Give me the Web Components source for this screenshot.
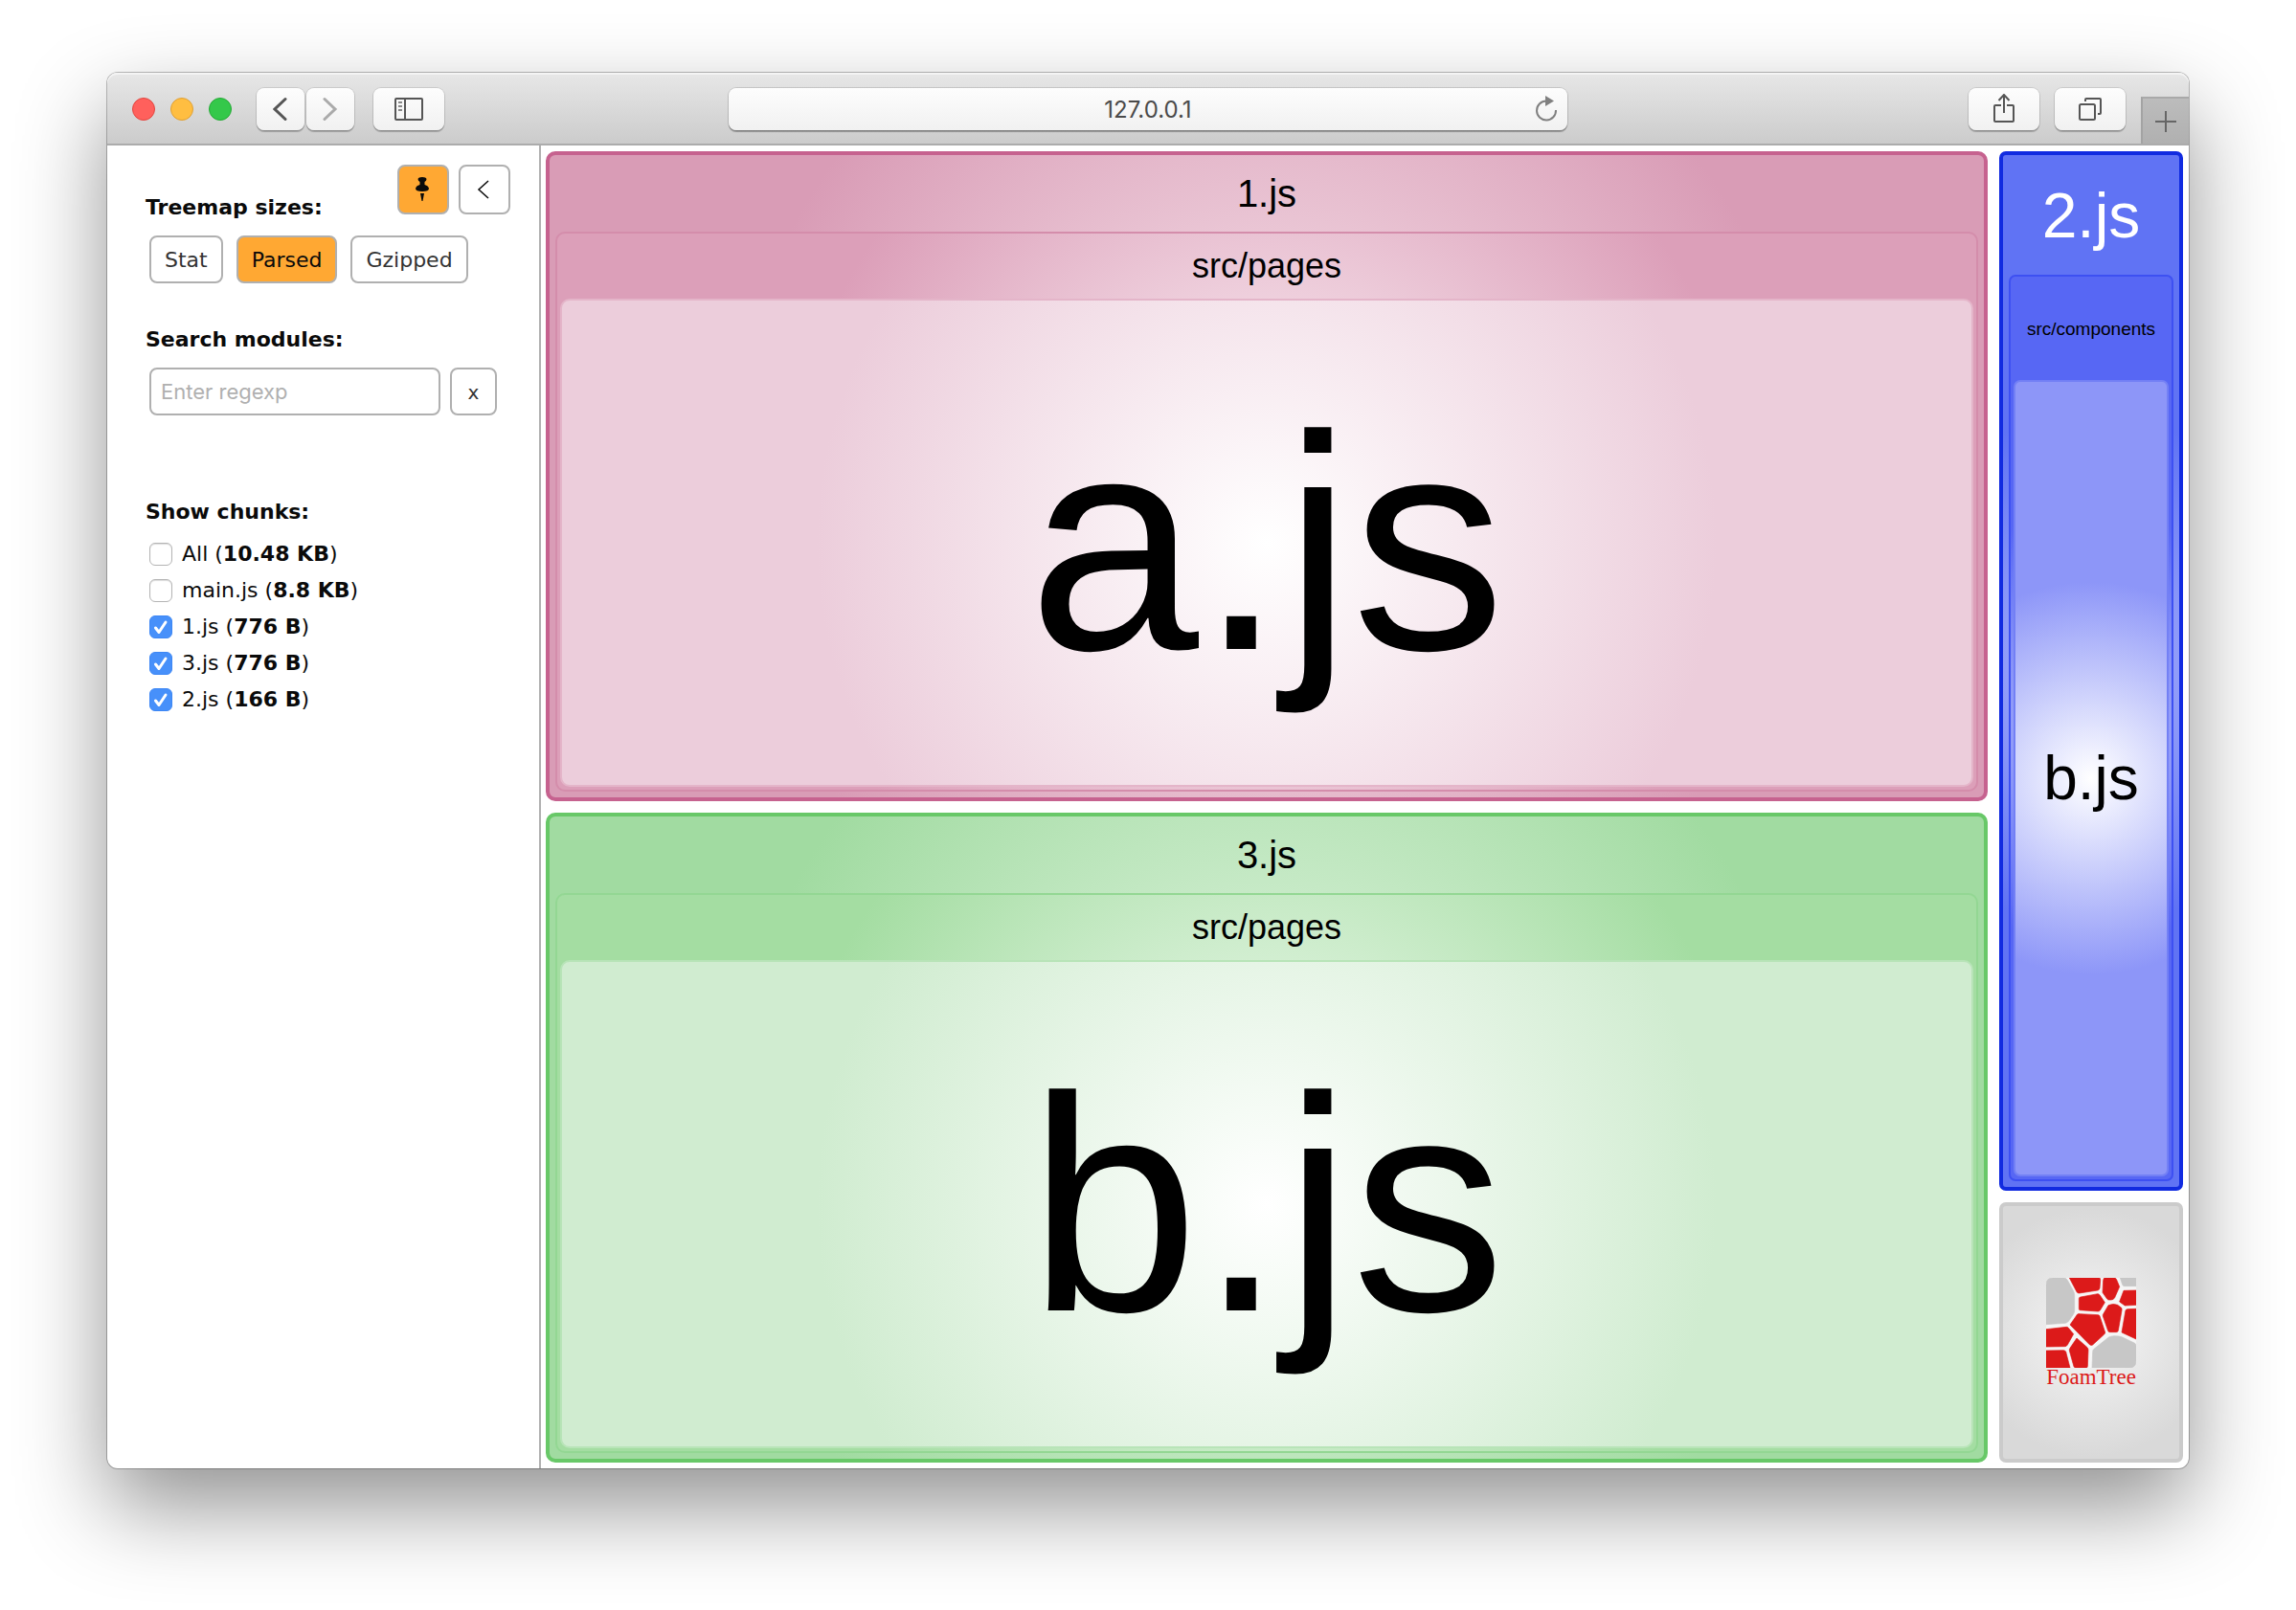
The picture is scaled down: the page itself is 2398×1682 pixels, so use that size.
<!DOCTYPE html>
<html lang="en">
<head>
<meta charset="utf-8">
<title>Bundle treemap</title>
<style>
  html { background: #fff; }
  body {
    margin: 0;
    box-sizing: border-box;
    min-height: 100vh;
    padding: 76px 112px 148px;
    display: flex;
    background: #fff;
    color: #0a0a0a;
    font: 22px/28px "DejaVu Sans", Verdana, sans-serif;
  }
  browser-window { flex: 1; }
  .pink {
    --edge: #c6628f; --fill: #d99cb6; --core: #f8e8ee;
    --edge2: #d48dab; --fill2: #dc9fb9; --core2: #fdf6f9;
    --edge3: #e4b5c9; --fill3: #eccddb;
  }
  .green {
    --edge: #68c868; --fill: #a1dba1; --core: #e6f6e6;
    --edge2: #93d793; --fill2: #a4dda2; --core2: #f6fcf6;
    --edge3: #b8e4b8; --fill3: #d0ecd0;
  }
  .wide { --head: 80px; --size: 40px; --head2: 68px; --size2: 36px; --size3: 320px; --r1: 560px; --r2: 500px; --r3: 470px; --curve: 10px; }
  .blue {
    --edge: #112be0; --fill: #6073f4; --core: #a8b0fb;
    --edge2: #3d50f2; --fill2: #5767f4; --core2: #b4bbfb;
    --edge3: #7380f5; --fill3: #8d96f8;
    --head: 125px; --size: 66px; --ink: #fff; --head2: 108px; --size2: 19px; --size3: 64px;
    --r1: 265px; --r2: 225px; --r3: 205px; --curve: 7px;
  }
  .grey { --edge: #cbcbcb; --fill: #d9d9d9; --core: #f6f6f6; --r1: 130px; --curve: 7px; }
</style>
</head>
<body>
<browser-window>
  <browser-toolbar slot="toolbar" address="127.0.0.1"></browser-toolbar>
  <side-panel>
    <chunk-item size="10.48 KB">All</chunk-item>
    <chunk-item size="8.8 KB">main.js</chunk-item>
    <chunk-item size="776 B" checked>1.js</chunk-item>
    <chunk-item size="776 B" checked>3.js</chunk-item>
    <chunk-item size="166 B" checked>2.js</chunk-item>
  </side-panel>
  <tree-map>
    <tree-group slot="main" class="pink wide" level="1" label="1.js">
      <tree-group level="2" label="src/pages"><tree-group level="3" label="a.js"></tree-group></tree-group>
    </tree-group>
    <tree-group slot="main" class="green wide" level="1" label="3.js">
      <tree-group level="2" label="src/pages"><tree-group level="3" label="b.js"></tree-group></tree-group>
    </tree-group>
    <tree-group slot="side" class="blue" level="1" label="2.js">
      <tree-group level="2" label="src/components"><tree-group level="3" label="b.js"></tree-group></tree-group>
    </tree-group>
    <tree-group slot="side" class="grey" level="1"><foam-logo></foam-logo></tree-group>
  </tree-map>
</browser-window>

<script>
function define(name, html, setup) {
  const template = document.createElement('template');
  template.innerHTML = html;
  customElements.define(name, class extends HTMLElement {
    constructor() {
      super();
      this.attachShadow({ mode: 'open' }).append(template.content.cloneNode(true));
    }
    connectedCallback() { if (setup) setup(this, this.shadowRoot); }
  });
}

define('browser-window', `
  <style>
    :host {
      display: flex; flex-direction: column; min-width: 0;
      background: #fff; border-radius: 11px;
      box-shadow: 0 0 0 1px rgba(0,0,0,.26), 0 40px 92px rgba(0,0,0,.43);
    }
    .content { flex: 1; display: flex; min-height: 0; }
  </style>
  <slot name="toolbar"></slot>
  <div class="content"><slot></slot></div>
`);

define('tool-button', `
  <style>
    :host { display: block; width: 74px; height: 44px; }
    button {
      display: flex; align-items: center; justify-content: center;
      width: 100%; height: 100%; padding: 0; border: 0; border-radius: 8px;
      background: linear-gradient(#fdfdfd, #f1f1f1);
      box-shadow: 0 0 0 1px rgba(0,0,0,.1), 0 2px 1px rgba(0,0,0,.24);
    }
  </style>
  <button type="button"><slot></slot></button>
`, (el, root) => root.querySelector('button').setAttribute('aria-label', el.getAttribute('name')));

define('browser-toolbar', `
  <style>
    :host {
      box-sizing: border-box; height: 76px;
      display: grid; grid-template-columns: 1fr minmax(0, 876px) 1fr; align-items: center;
      background: linear-gradient(#e7e7e7, #cbcbcb);
      border-radius: 11px 11px 0 0;
      box-shadow: inset 0 2px 0 #f4f4f4, inset 0 -2px 0 #acacac;
    }
    .left { display: flex; align-items: center; padding-left: 26px; }
    .lights { display: flex; gap: 16px; margin-right: 26px; }
    .lights i { width: 24px; height: 24px; border-radius: 50%; box-sizing: border-box; border: 1px solid var(--rim); }
    .close { background: #ff605c; --rim: #e2463f; }
    .mini { background: #ffbe41; --rim: #dfa034; }
    .zoom { background: #34c84a; --rim: #25aa35; }
    .nav { display: flex; gap: 2px; margin-right: 20px; }
    .nav tool-button { width: 50px; }
    .address {
      box-sizing: border-box; height: 44px; padding: 0 10px;
      display: grid; grid-template-columns: 28px 1fr 28px; align-items: center; justify-items: end;
      background: linear-gradient(#fdfdfd, #f1f1f1); border-radius: 8px;
      box-shadow: 0 0 0 1px rgba(0,0,0,.12), 0 2px 1px rgba(0,0,0,.3);
    }
    input {
      grid-column: 2; width: 100%; min-width: 0; padding: 2px 0 0; border: 0; background: none; text-align: center;
      color: #4a4a4a; font: 24px/28px Inter, sans-serif;
    }
    .reload { padding: 0; border: 0; background: none; display: flex; }
    .right { display: flex; align-items: center; justify-content: flex-end; gap: 16px; align-self: stretch; }
    .new {
      align-self: flex-end; width: 50px; height: 49px; padding: 0; margin-bottom: 2px;
      display: flex; align-items: center; justify-content: center;
      border: 0; border-left: 2px solid #a3a3a3; border-top: 2px solid #a9a9a9;
      background: linear-gradient(#bcbcbc, #b0b0b0);
    }
    svg { display: block; fill: none; stroke: #555; stroke-width: 2; }
  </style>
  <div class="left">
    <div class="lights"><i class="close"></i><i class="mini"></i><i class="zoom"></i></div>
    <div class="nav">
      <tool-button name="Back"><svg width="16" height="26" viewBox="0 0 16 26" stroke-linecap="round" style="stroke-width:3"><path d="M13 2.500 2 13l11 10.500"/></svg></tool-button>
      <tool-button name="Forward"><svg width="16" height="26" viewBox="0 0 16 26" stroke-linecap="round" style="stroke-width:3;stroke:#aaa"><path d="M2 2.500 13 13 2 23.500"/></svg></tool-button>
    </div>
    <tool-button name="Sidebar"><svg width="30" height="24" viewBox="0 0 30 24"><rect x="1" y="1" width="28" height="22" rx="1"/><path d="M11 1v22"/><path d="M4 5h4M4 9h4M4 13h4" stroke="#888"/></svg></tool-button>
  </div>
  <div class="address">
    <input type="text" aria-label="Address">
    <button class="reload" type="button" aria-label="Reload"><svg width="24" height="28" viewBox="0 0 24 28" style="stroke:#808080"><path d="M12 5.500A10 10 0 1 0 22 15"/><path d="M11 0v11l9-5.500z" fill="#808080" stroke="none"/></svg></button>
  </div>
  <div class="right">
    <tool-button name="Share"><svg width="22" height="32" viewBox="0 0 22 32"><path d="M8 12H2q-1 0-1 1v15q0 1 1 1h18q1 0 1-1V13q0-1-1-1h-6M11 20V1M5.500 7 11 1l5.500 6"/></svg></tool-button>
    <tool-button name="Tabs"><svg width="24" height="24" viewBox="0 0 24 24"><rect x="1" y="7" width="16" height="16" rx="1.500"/><path d="M7 4V2q0-1 1-1h14q1 0 1 1v14q0 1-1 1h-2"/></svg></tool-button>
    <button class="new" type="button" aria-label="New tab"><svg width="22" height="22" viewBox="0 0 22 22" style="stroke:#666"><path d="M11 0v22M0 11h22"/></svg></button>
  </div>
`, (el, root) => { root.querySelector('input').value = el.getAttribute('address'); });

define('panel-button', `
  <style>
    :host { display: block; height: 50px; }
    button {
      box-sizing: border-box; width: 100%; height: 100%; padding: 2px 14px 0;
      display: flex; align-items: center; justify-content: center;
      background: #fff; border: 2px solid #b0b0b0; border-radius: 8px;
      color: #333; font: inherit;
    }
    :host([name]) button { padding: 0 2px 0 0; }
    :host([active]) button { background: #ffa833; color: #0a0a0a; }
  </style>
  <button type="button"><slot></slot></button>
`, (el, root) => {
  const name = el.getAttribute('name');
  if (name) root.querySelector('button').setAttribute('aria-label', name);
});

define('chunk-item', `
  <style>
    :host { display: block; }
    label { display: flex; align-items: center; height: 38px; padding-left: 4px; }
    input {
      appearance: none; box-sizing: border-box; width: 24px; height: 24px; margin: 0 10px 0 0;
      border: 1px solid #b4b4b4; border-radius: 6px; background: #fff;
      box-shadow: inset 0 1px 1px rgba(0,0,0,.14);
    }
    input:checked { background: #4790fa; border-color: #3d87f5; box-shadow: none; }
    .box { display: grid; }
    .box > * { grid-area: 1 / 1; }
    svg { width: 24px; height: 24px; fill: none; stroke: #fff; stroke-width: 3; stroke-linecap: round; stroke-linejoin: round; pointer-events: none; z-index: 1; }
    input:not(:checked) + svg { display: none; }
  </style>
  <label>
    <span class="box"><input type="checkbox"><svg viewBox="0 0 24 24"><path d="M6.500 13 10 17.500 17 7"/></svg></span>
    <span><slot></slot> (<b></b>)</span>
  </label>
`, (el, root) => {
  root.querySelector('b').textContent = el.getAttribute('size');
  root.querySelector('input').checked = el.hasAttribute('checked');
});

define('side-panel', `
  <style>
    :host { box-sizing: border-box; flex: none; width: 453px; padding: 20px 30px 20px 40px; border-right: 2px solid #b0b0b0; }
    h2, .title { margin: 0; font: inherit; font-weight: bold; line-height: 30px; display: block; }
    .top { display: flex; justify-content: space-between; height: 58px; margin-bottom: 16px; }
    .top h2 { padding-top: 30px; }
    .corner, .row { display: flex; gap: 10px; }
    .corner panel-button { width: 54px; height: 52px; }
    .row { padding: 0 14px 0 4px; }
    .sizes { gap: 14px; }
    .search { margin: 44px 0 86px; }
    .search .title { margin-bottom: 14px; }
    input {
      box-sizing: border-box; flex: 1; min-width: 0; height: 50px; padding: 0 10px;
      border: 2px solid #b0b0b0; border-radius: 8px; background: #fff;
      color: #0a0a0a; font: 22px/28px Inter, sans-serif;
    }
    input::placeholder { color: #b0b0b0; opacity: 1; }
    .search panel-button { width: 49px; font-size: 20px; }
    .chunks h2 { margin-bottom: 10px; }
    svg { display: block; }
  </style>
  <section>
    <div class="top">
      <h2>Treemap sizes:</h2>
      <div class="corner">
        <panel-button name="Pin" active><svg width="16" height="28" viewBox="0 0 16 28" fill="#0a0a0a"><path d="M3.500 3Q4 1 8 1t4.500 2q0 2-2 3v3q4 1 4.500 4 0 3-7 3t-7-3q.5-3 4.500-4V6q-2-1-2-3zM6 18h4L8.500 26h-1z"/></svg></panel-button>
        <panel-button name="Collapse"><svg width="14" height="20" viewBox="0 0 14 20" fill="none" stroke="#0a0a0a" stroke-width="1.500"><path d="M12 1 2 10l10 9"/></svg></panel-button>
      </div>
    </div>
    <div class="row sizes">
      <panel-button>Stat</panel-button>
      <panel-button active>Parsed</panel-button>
      <panel-button>Gzipped</panel-button>
    </div>
  </section>
  <section class="search">
    <label class="title" for="query">Search modules:</label>
    <div class="row">
      <input id="query" type="text" placeholder="Enter regexp">
      <panel-button>x</panel-button>
    </div>
  </section>
  <section class="chunks">
    <h2>Show chunks:</h2>
    <slot></slot>
  </section>
`);

define('tree-map', `
  <style>
    :host { flex: 1; min-width: 0; display: grid; grid-template-columns: 1506fr 192fr; gap: 12px; padding: 6px 6px 6px 5px; }
    .main, .side { display: grid; gap: 12px; min-width: 0; }
    .main { grid-template-rows: 1fr 1fr; }
    .side { grid-template-rows: 4fr 1fr; }
  </style>
  <div class="main"><slot name="main"></slot></div>
  <div class="side"><slot name="side"></slot></div>
`);

define('tree-group', `
  <style>
    :host {
      box-sizing: border-box; flex: 1; min-width: 0; min-height: 0;
      display: flex; flex-direction: column; color: #000;
      font-family: "Liberation Sans", Arial, sans-serif;
      border-radius: var(--curve);
    }
    .label { display: flex; align-items: center; justify-content: center; line-height: 1; white-space: nowrap; }
    .label:empty { display: none; }
    :host([level="1"]) {
      border: 4px solid var(--edge); padding: 0 6px 6px;
      background: radial-gradient(circle var(--r1) at center, var(--core), var(--fill));
    }
    :host([level="1"]) .label { height: var(--head); font-size: var(--size); color: var(--ink, #000); }
    :host([level="2"]) {
      border: 2px solid var(--edge2); padding: 0 3px 3px;
      background: radial-gradient(circle var(--r2) at center, var(--core2), var(--fill2));
    }
    :host([level="2"]) .label { height: var(--head2); font-size: var(--size2); }
    :host([level="3"]) {
      border: 2px solid var(--edge3); justify-content: center;
      background: radial-gradient(circle var(--r3) at center, #fff, var(--fill3));
    }
    :host([level="3"]) .label { font-size: var(--size3); }
  </style>
  <div class="label"></div>
  <slot></slot>
`, (el, root) => { root.querySelector('.label').textContent = el.getAttribute('label') || ''; });

define('foam-logo', `
  <style>
    :host { flex: 1; display: flex; flex-direction: column; align-items: center; justify-content: center; padding-top: 6px; }
    svg { width: 94px; height: 94px; display: block; fill: #dc1a1a; stroke: #dc1a1a; stroke-width: 2; stroke-linejoin: round; }
    .g { fill: #c7c7c7; stroke: #c7c7c7; }
    .w { fill: #f6f6f6; stroke: none; }
    span { color: #dc1a1a; font: 23px/20px "Liberation Serif", serif; }
  </style>
  <svg viewBox="81 48 282 282" aria-hidden="true">
    <rect class="w" x="81" y="48" width="282" height="282" rx="22"/>
    <path class="g" d="M81 194V70Q81 48 103 48H138Q145 49 149 57L167 90Q170 96 170 104V150Q170 157 166 163L152 183Q148 189 141 190Z"/>
    <path d="M154 48H248Q251 49 251 55L249 80Q248 86 243 87L185 96Q180 97 177 92Z"/>
    <path d="M264 48H296Q300 49 302 54L311 76 296 110Q292 117 285 117H278Q274 117 272 114L258 94 260 56Q261 49 264 48Z"/>
    <path class="g" d="M313 48H363V74H326Q322 74 320 69Z"/>
    <path d="M324 88 363 87V133L328 135 311 123Z"/>
    <path d="M184 113Q184 109 189 108L243 98Q247 98 250 103L265 125 250 150Q248 153 243 153L187 149Q184 149 184 145Z"/>
    <path d="M179 162Q182 160 187 161L243 164Q248 164 249 168L266 219Q266 222 263 225L227 258Q222 261 217 257L156 195Z"/>
    <path d="M276 134Q292 127 305 133L317 142Q319 145 318 150L307 213Q306 218 301 218H281Q276 218 275 214L259 168Q258 164 261 160Z"/>
    <path d="M330 150Q331 147 336 146L363 145V240L318 219Z"/>
    <path class="g" d="M277 234Q282 231 294 230 312 230 320 234L359 253Q363 256 363 262V308Q363 330 341 330H225L227 280Q227 274 231 271Z"/>
    <path d="M81 209 145 202Q149 202 152 206L167 224 148 258Q145 263 140 263L81 264Z"/>
    <path d="M81 276 136 275Q141 275 143 280L156 330H81Z"/>
    <path d="M177 237 210 266Q213 269 213 274L211 325Q211 330 207 330H174Q170 330 168 326L154 276Q153 273 156 268Z"/>
  </svg>
  <span>FoamTree</span>
`);
</script>
</body>
</html>
